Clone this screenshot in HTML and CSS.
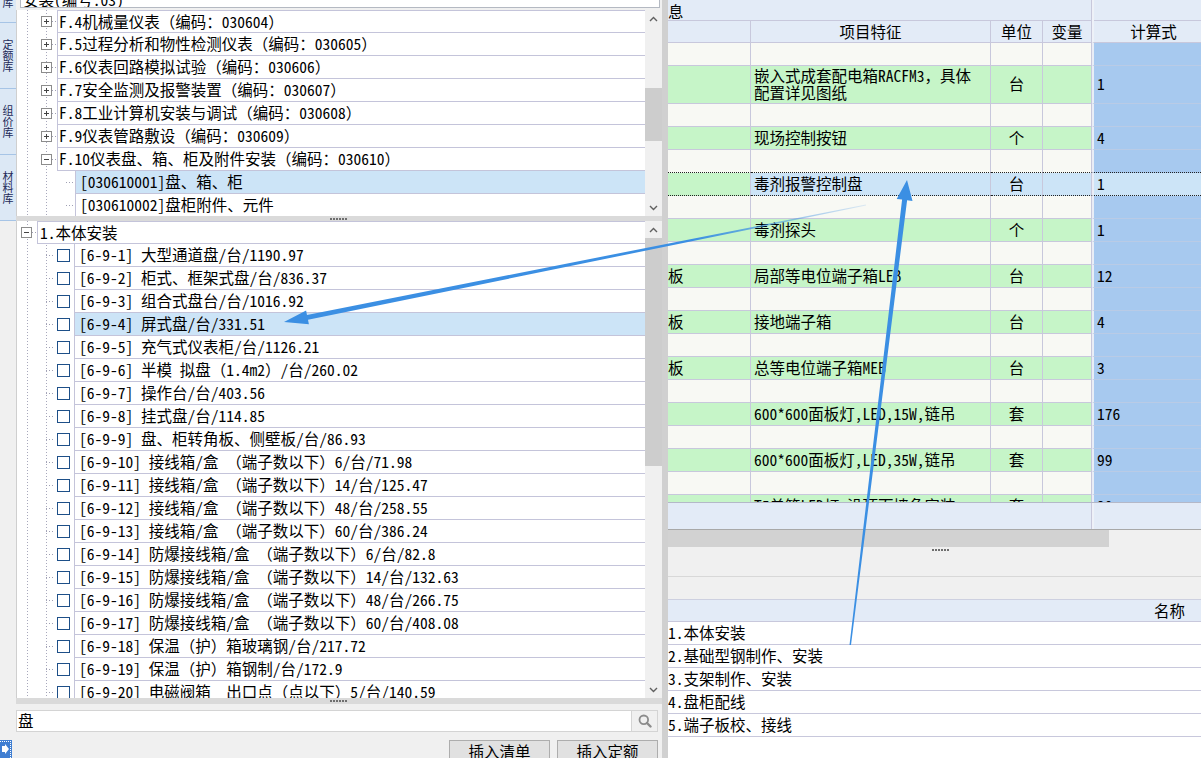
FILE: index.html
```html
<!DOCTYPE html>
<html lang="zh-CN">
<head>
<meta charset="utf-8">
<title>清单定额</title>
<link rel="stylesheet" href="styles.css">
</head>
<body>
<div class="app">
  <aside class="sidebar">
    <div class="tab tab-top"><span class="vt">库</span></div>
    <div class="tab"><span class="vt">定额库</span></div>
    <div class="tab"><span class="vt">组价库</span></div>
    <div class="tab"><span class="vt">材料库</span></div>
    <div class="side-rest">
      <svg class="side-icon" width="12" height="18" viewBox="0 0 12 18">
        <rect x="0" y="0" width="12" height="18" fill="#3f7ed2"/>
        <path d="M0 1.5H11M10.5 1V18" stroke="#ffffff" stroke-width="1" stroke-dasharray="1 1" fill="none"/>
        <polygon points="2,6 5,6 5,4 9,9 5,14 5,12 2,12" fill="#ffffff"/>
      </svg>
    </div>
  </aside>

  <section class="left">
    <div class="combo"><span>安装(编号:03)</span></div>

    <div class="tree top-tree">
      <div class="tree-body">
        <div class="trow f"><span class="exp plus"></span><span class="hdot"></span><div class="cell first">F.4机械量仪表（编码：030604）</div></div>
        <div class="trow f"><span class="exp plus"></span><span class="hdot"></span><div class="cell">F.5过程分析和物性检测仪表（编码：030605）</div></div>
        <div class="trow f"><span class="exp plus"></span><span class="hdot"></span><div class="cell">F.6仪表回路模拟试验（编码：030606）</div></div>
        <div class="trow f"><span class="exp plus"></span><span class="hdot"></span><div class="cell">F.7安全监测及报警装置（编码：030607）</div></div>
        <div class="trow f"><span class="exp plus"></span><span class="hdot"></span><div class="cell">F.8工业计算机安装与调试（编码：030608）</div></div>
        <div class="trow f"><span class="exp plus"></span><span class="hdot"></span><div class="cell">F.9仪表管路敷设（编码：030609）</div></div>
        <div class="trow f"><span class="exp minus"></span><span class="hdot"></span><div class="cell">F.10仪表盘、箱、柜及附件安装（编码：030610）</div></div>
        <div class="trow ch"><span class="hdot"></span><div class="cell hl">[030610001]盘、箱、柜</div></div>
        <div class="trow ch"><span class="hdot"></span><div class="cell">[030610002]盘柜附件、元件</div></div>
      </div>
      <div class="vscroll">
        <div class="arr"><svg width="9" height="6" viewBox="0 0 9 6"><polyline points="1,5 4.5,1.5 8,5" fill="none" stroke="#606060" stroke-width="1.4"/></svg></div>
        <div class="track"><div class="thumb"></div></div>
        <div class="arr"><svg width="9" height="6" viewBox="0 0 9 6"><polyline points="1,1 4.5,4.5 8,1" fill="none" stroke="#606060" stroke-width="1.4"/></svg></div>
      </div>
    </div>

    <div class="splitter"><span class="dots"></span></div>

    <div class="tree bottom-tree">
      <div class="tree-body">
        <div class="trow rt"><span class="exp minus"></span><span class="hdot"></span><div class="cell first">1.本体安装</div></div>
        <div class="trow it"><span class="hdot"></span><span class="cb"></span><div class="cell">[6-9-1] 大型通道盘/台/1190.97</div></div>
        <div class="trow it"><span class="hdot"></span><span class="cb"></span><div class="cell">[6-9-2] 柜式、框架式盘/台/836.37</div></div>
        <div class="trow it"><span class="hdot"></span><span class="cb"></span><div class="cell">[6-9-3] 组合式盘台/台/1016.92</div></div>
        <div class="trow it"><span class="hdot"></span><span class="cb"></span><div class="cell hl">[6-9-4] 屏式盘/台/331.51</div></div>
        <div class="trow it"><span class="hdot"></span><span class="cb"></span><div class="cell">[6-9-5] 充气式仪表柜/台/1126.21</div></div>
        <div class="trow it"><span class="hdot"></span><span class="cb"></span><div class="cell">[6-9-6] 半模 拟盘（1.4m2）/台/260.02</div></div>
        <div class="trow it"><span class="hdot"></span><span class="cb"></span><div class="cell">[6-9-7] 操作台/台/403.56</div></div>
        <div class="trow it"><span class="hdot"></span><span class="cb"></span><div class="cell">[6-9-8] 挂式盘/台/114.85</div></div>
        <div class="trow it"><span class="hdot"></span><span class="cb"></span><div class="cell">[6-9-9] 盘、柜转角板、侧壁板/台/86.93</div></div>
        <div class="trow it"><span class="hdot"></span><span class="cb"></span><div class="cell">[6-9-10] 接线箱/盒 （端子数以下）6/台/71.98</div></div>
        <div class="trow it"><span class="hdot"></span><span class="cb"></span><div class="cell">[6-9-11] 接线箱/盒 （端子数以下）14/台/125.47</div></div>
        <div class="trow it"><span class="hdot"></span><span class="cb"></span><div class="cell">[6-9-12] 接线箱/盒 （端子数以下）48/台/258.55</div></div>
        <div class="trow it"><span class="hdot"></span><span class="cb"></span><div class="cell">[6-9-13] 接线箱/盒 （端子数以下）60/台/386.24</div></div>
        <div class="trow it"><span class="hdot"></span><span class="cb"></span><div class="cell">[6-9-14] 防爆接线箱/盒 （端子数以下）6/台/82.8</div></div>
        <div class="trow it"><span class="hdot"></span><span class="cb"></span><div class="cell">[6-9-15] 防爆接线箱/盒 （端子数以下）14/台/132.63</div></div>
        <div class="trow it"><span class="hdot"></span><span class="cb"></span><div class="cell">[6-9-16] 防爆接线箱/盒 （端子数以下）48/台/266.75</div></div>
        <div class="trow it"><span class="hdot"></span><span class="cb"></span><div class="cell">[6-9-17] 防爆接线箱/盒 （端子数以下）60/台/408.08</div></div>
        <div class="trow it"><span class="hdot"></span><span class="cb"></span><div class="cell">[6-9-18] 保温（护）箱玻璃钢/台/217.72</div></div>
        <div class="trow it"><span class="hdot"></span><span class="cb"></span><div class="cell">[6-9-19] 保温（护）箱钢制/台/172.9</div></div>
        <div class="trow it"><span class="hdot"></span><span class="cb"></span><div class="cell">[6-9-20] 电磁阀箱  出口点（点以下）5/台/140.59</div></div>
      </div>
      <div class="vscroll">
        <div class="arr"><svg width="9" height="6" viewBox="0 0 9 6"><polyline points="1,5 4.5,1.5 8,5" fill="none" stroke="#606060" stroke-width="1.4"/></svg></div>
        <div class="track"><div class="thumb"></div></div>
        <div class="arr"><svg width="9" height="6" viewBox="0 0 9 6"><polyline points="1,1 4.5,4.5 8,1" fill="none" stroke="#606060" stroke-width="1.4"/></svg></div>
      </div>
    </div>

    <div class="splitter low"><span class="dots"></span></div>

    <div class="search">
      <div class="search-input">盘</div>
      <div class="search-btn">
        <svg width="14" height="14" viewBox="0 0 14 14"><circle cx="5.8" cy="5.8" r="4.3" fill="none" stroke="#8c8c8c" stroke-width="1.8"/><line x1="9" y1="9" x2="12.5" y2="12.5" stroke="#8c8c8c" stroke-width="2.4" stroke-linecap="round"/></svg>
      </div>
    </div>

    <div class="btns">
      <div class="btn">插入清单</div>
      <div class="btn">插入定额</div>
    </div>
  </section>

  <div class="divider"></div>

  <section class="right">
    <div class="h1"><div class="hc">息</div><div class="hc hc2"></div></div>
    <div class="h2">
      <div class="c"></div><div class="c ctr">项目特征</div><div class="c ctr">单位</div><div class="c ctr">变量</div><div class="c ctr calc-h">计算式</div>
    </div>
    <div class="tbody">
      <div class="tr blank"><div class="c"></div><div class="c"></div><div class="c"></div><div class="c"></div><div class="c calc"></div></div>
      <div class="tr green tall"><div class="c"></div><div class="c"><span>嵌入式成套配电箱RACFM3，具体<br>配置详见图纸</span></div><div class="c ctr">台</div><div class="c"></div><div class="c calc">1</div></div>
      <div class="tr blank"><div class="c"></div><div class="c"></div><div class="c"></div><div class="c"></div><div class="c calc"></div></div>
      <div class="tr green"><div class="c"></div><div class="c">现场控制按钮</div><div class="c ctr">个</div><div class="c"></div><div class="c calc">4</div></div>
      <div class="tr blank pre"><div class="c"></div><div class="c"></div><div class="c"></div><div class="c"></div><div class="c calc"></div></div>
      <div class="tr sel"><div class="c"></div><div class="c">毒剂报警控制盘</div><div class="c ctr">台</div><div class="c"></div><div class="c calc">1</div></div>
      <div class="tr blank"><div class="c"></div><div class="c"></div><div class="c"></div><div class="c"></div><div class="c calc"></div></div>
      <div class="tr green"><div class="c"></div><div class="c">毒剂探头</div><div class="c ctr">个</div><div class="c"></div><div class="c calc">1</div></div>
      <div class="tr blank"><div class="c"></div><div class="c"></div><div class="c"></div><div class="c"></div><div class="c calc"></div></div>
      <div class="tr green"><div class="c c1">板</div><div class="c">局部等电位端子箱LEB</div><div class="c ctr">台</div><div class="c"></div><div class="c calc">12</div></div>
      <div class="tr blank"><div class="c"></div><div class="c"></div><div class="c"></div><div class="c"></div><div class="c calc"></div></div>
      <div class="tr green"><div class="c c1">板</div><div class="c">接地端子箱</div><div class="c ctr">台</div><div class="c"></div><div class="c calc">4</div></div>
      <div class="tr blank"><div class="c"></div><div class="c"></div><div class="c"></div><div class="c"></div><div class="c calc"></div></div>
      <div class="tr green"><div class="c c1">板</div><div class="c">总等电位端子箱MEB</div><div class="c ctr">台</div><div class="c"></div><div class="c calc">3</div></div>
      <div class="tr blank"><div class="c"></div><div class="c"></div><div class="c"></div><div class="c"></div><div class="c calc"></div></div>
      <div class="tr green"><div class="c"></div><div class="c">600*600面板灯,LED,15W,链吊</div><div class="c ctr">套</div><div class="c"></div><div class="c calc">176</div></div>
      <div class="tr blank"><div class="c"></div><div class="c"></div><div class="c"></div><div class="c"></div><div class="c calc"></div></div>
      <div class="tr green"><div class="c"></div><div class="c">600*600面板灯,LED,35W,链吊</div><div class="c ctr">套</div><div class="c"></div><div class="c calc">99</div></div>
      <div class="tr blank"><div class="c"></div><div class="c"></div><div class="c"></div><div class="c"></div><div class="c calc"></div></div>
      <div class="tr green"><div class="c"></div><div class="c">T5单管LED灯,沿顶面墙角安装</div><div class="c ctr">套</div><div class="c"></div><div class="c calc">20</div></div>
    </div>
    <div class="tfoot"><div class="fc"></div><div class="fc fc2"></div></div>
    <div class="hscroll"><div class="hthumb"></div></div>
    <div class="rsplit"><span class="dots"></span></div>
    <div class="band"></div>
    <div class="band band2"></div>
    <div class="lhead">名称</div>
    <div class="lrow">1.本体安装</div>
    <div class="lrow">2.基础型钢制作、安装</div>
    <div class="lrow">3.支架制作、安装</div>
    <div class="lrow">4.盘柜配线</div>
    <div class="lrow">5.端子板校、接线</div>
    <div class="lrest"></div>
  </section>

  <svg class="arrows" width="1201" height="758" viewBox="0 0 1201 758">
    <defs>
      <linearGradient id="fade1" gradientUnits="userSpaceOnUse" x1="284" y1="322" x2="866" y2="205">
        <stop offset="0" stop-color="#3b8fe3" stop-opacity="1"/>
        <stop offset="0.7" stop-color="#3b8fe3" stop-opacity="1"/>
        <stop offset="1" stop-color="#3b8fe3" stop-opacity="0.15"/>
      </linearGradient>
    </defs>
    <polygon fill="url(#fade1)" points="284,322 308.9,324.2 308.0,319.8 866.1,205.5 865.9,204.5 307.0,314.9 306.1,310.4"/>
    <polygon fill="#3b8fe3" points="907,180 912.5,200.9 907.1,200.2 851,645.1 849.5,644.9 902.1,199.6 896.7,198.9"/>
  </svg>
</div>
</body>
</html>
```

FILE: styles.css
```css
:root {
  --tl: #c4c4da;
  --line: #c8c8dc;
  --hdr: #e3ebf7;
  --green: #c6f5c8;
  --blank: #f8f9f4;
  --blue: #a7c9ef;
  --sel: #cce4f7;
}

* { box-sizing: border-box; }

html, body { margin: 0; padding: 0; }

body {
  width: 1201px;
  height: 758px;
  overflow: hidden;
  background: #f0f0f0;
  font-family: "Noto Sans Mono CJK SC", "Noto Sans CJK SC", "Liberation Mono", monospace;
  font-size: 15.5px;
  color: #000;
}

.app {
  position: relative;
  display: flex;
  width: 1201px;
  height: 758px;
  overflow: hidden;
}

/* ---------- sidebar ---------- */
.sidebar {
  width: 16px;
  flex: none;
  display: flex;
  flex-direction: column;
}
.tab {
  flex: none;
  height: 66px;
  background: #dce8f5;
  border-bottom: 1px solid #a6c4e6;
  display: flex;
  align-items: center;
}
.tab-top {
  height: 23px;
  align-items: flex-end;
  padding-bottom: 14px;
  overflow: hidden;
}
.vt {
  display: block;
  writing-mode: vertical-rl;
  text-orientation: upright;
  font-size: 11px;
  line-height: 15px;
  color: #1e2a58;
}
.side-rest {
  flex: 1;
  display: flex;
  align-items: flex-end;
}
.side-icon { display: block; }

/* ---------- left panel ---------- */
.left {
  width: 646px;
  flex: none;
  display: flex;
  flex-direction: column;
}
.combo {
  flex: none;
  height: 8px;
  margin: 0 2px 2px 4px;
  border: 1px solid #b4b9c2;
  border-top: none;
  background: #fff;
  display: flex;
  align-items: flex-end;
  overflow: hidden;
  padding-left: 2px;
}
.combo span {
  line-height: 16px;
  white-space: nowrap;
}

.tree {
  flex: none;
  display: flex;
  border-left: 1px solid #cfcfcf;
  background: #fff;
  overflow: hidden;
}
.top-tree { height: 206px; }
.bottom-tree { height: 477px; }

.tree-body {
  flex: 1;
  min-width: 0;
  overflow: hidden;
  background-color: #fff;
  background-image:
    repeating-linear-gradient(to bottom, #a8a8bc 0 1px, transparent 1px 3px),
    repeating-linear-gradient(to bottom, #a8a8bc 0 1px, transparent 1px 3px);
  background-size: 1px 100%, 1px 100%;
  background-position: 10px 0, 29px 0;
  background-repeat: no-repeat;
}

.trow {
  display: flex;
  align-items: center;
  height: 23px;
}
.trow.f { padding-left: 24px; }
.trow.ch { padding-left: 49px; }
.trow.rt { padding-left: 4px; }
.trow.it { padding-left: 29px; }

.exp {
  position: relative;
  flex: none;
  width: 11px;
  height: 11px;
  border: 1px solid #8c8c8c;
  background: #fff;
}
.exp::before {
  content: "";
  position: absolute;
  left: 2px;
  top: 4px;
  width: 5px;
  height: 1px;
  background: #444;
}
.exp.plus::after {
  content: "";
  position: absolute;
  left: 4px;
  top: 2px;
  width: 1px;
  height: 5px;
  background: #444;
}

.hdot {
  flex: none;
  height: 1px;
  background: repeating-linear-gradient(to right, #a0a0b4 0 1px, transparent 1px 3px);
}
.f .hdot, .rt .hdot { width: 5px; }
.ch .hdot, .it .hdot { width: 9px; }

.cb {
  flex: none;
  width: 13px;
  height: 13px;
  margin: 0 4px 0 2px;
  border: 1px solid #1d4f88;
  background: #fff;
}

.cell {
  flex: 1;
  min-width: 0;
  align-self: stretch;
  display: flex;
  align-items: center;
  padding: 0 0 2px 1px;
  border-left: 1px solid var(--tl);
  border-bottom: 1px solid var(--tl);
  white-space: pre;
  overflow: hidden;
  background: #fff;
}
.cell.first { border-top: 1px solid var(--tl); }
.ch .cell, .it .cell { padding-left: 4px; }
.rt .cell { padding-left: 2px; }
.cell.hl { background: var(--sel); }

.vscroll {
  flex: none;
  width: 17px;
  background: #f0f0f0;
  display: flex;
  flex-direction: column;
}
.arr {
  flex: none;
  height: 17px;
  display: flex;
  align-items: center;
  justify-content: center;
}
.arr svg { display: block; }
.track { flex: 1; }
.thumb { background: #cdcdcd; }
.top-tree .thumb { margin-top: 61px; height: 53px; }
.bottom-tree .thumb { height: 228px; }

.splitter {
  flex: none;
  height: 5px;
  background: #dadada;
  display: flex;
  align-items: center;
  justify-content: center;
}
.splitter.low { height: 6px; }
.dots {
  display: block;
  width: 18px;
  height: 2px;
  background: repeating-linear-gradient(to right, #6e6e6e 0 2px, transparent 2px 3px);
}

.search {
  flex: none;
  display: flex;
  height: 22px;
  margin: 6px 4px 0 0;
}
.search-input {
  flex: 1;
  display: flex;
  align-items: center;
  padding: 0 0 2px 1px;
  background: #fff;
  border: 1px solid #d4d4d4;
}
.search-btn {
  width: 26px;
  display: flex;
  align-items: center;
  justify-content: center;
  background: #f0f0f0;
  border: 1px solid #d4d4d4;
  border-left: none;
}

.btns {
  flex: none;
  display: flex;
  justify-content: flex-end;
  gap: 7px;
  margin: 8px 4px 0 0;
}
.btn {
  width: 101px;
  height: 24px;
  display: flex;
  align-items: center;
  justify-content: center;
  padding-bottom: 3px;
  background: #e1e1e1;
  border: 1px solid #adadad;
}

.divider {
  flex: none;
  width: 6px;
  background: #d0d0d0;
}

/* ---------- right panel ---------- */
.right {
  flex: 1;
  min-width: 0;
  display: flex;
  flex-direction: column;
  overflow: hidden;
  background: #f0f0f0;
}

.h1 {
  flex: none;
  display: grid;
  grid-template-columns: 424px 1fr;
  height: 21px;
  background: var(--hdr);
  border-bottom: 1px solid var(--line);
}
.hc {
  display: flex;
  align-items: center;
  padding-bottom: 2px;
  border-right: 1px solid var(--line);
  white-space: nowrap;
}
.hc2 {
  border-right: none;
  border-left: 2px solid #eef1f8;
}

.h2, .tr {
  display: grid;
  grid-template-columns: 83px 240px 52px 49px 1fr;
}
.h2 {
  flex: none;
  height: 22px;
  background: var(--hdr);
}
.tr { height: 23px; }
.tr.tall { height: 38px; }

.c {
  display: flex;
  align-items: center;
  padding: 0 0 2px 3px;
  border-right: 1px solid var(--line);
  border-bottom: 1px solid var(--line);
  white-space: nowrap;
  overflow: hidden;
}
.h2 .c { padding-bottom: 1px; }
.c.ctr { justify-content: center; padding-left: 0; }
.c.c1 { padding-left: 0; }
.h2 .calc-h {
  border-right: none;
  border-left: 2px solid #eef1f8;
  padding-left: 12px;
}
.tall .c { line-height: 16.5px; }

.tbody {
  flex: none;
  height: 459px;
  overflow: hidden;
}
.tr.blank .c { background: var(--blank); }
.tr.green .c { background: var(--green); }
.tr.sel .c {
  background: var(--sel);
  border-bottom: 1px dotted #222;
}
.tr.sel .c:first-child { background: var(--green); }
.tr.pre .c { border-bottom: 1px dotted #222; }
.tr .c.calc {
  background: var(--blue);
  border-right: none;
  border-left: 2px solid #e9edf6;
  border-bottom-color: #b9cbe6;
}
.tr.sel .c.calc {
  background: var(--sel);
  border-bottom: 1px dotted #222;
}
.tr.pre .c.calc { border-bottom: 1px dotted #222; }

.tfoot {
  flex: none;
  display: grid;
  grid-template-columns: 424px 1fr;
  height: 27px;
  background: var(--hdr);
  border-top: 1px solid #b4b8c8;
}
.fc { border-right: 1px solid var(--line); }
.fc2 { border-right: none; border-left: 2px solid #eef1f8; }

.hscroll {
  flex: none;
  height: 18px;
  display: flex;
  background: #f0f0f0;
  border-top: 1px solid #a8a8a8;
}
.hthumb {
  width: 441px;
  background: #d2d2d2;
}

.rsplit {
  flex: none;
  height: 6px;
  display: flex;
  align-items: center;
  padding-left: 264px;
}

.band {
  flex: none;
  height: 24px;
  background: #f0f0f0;
  border-bottom: 1px solid #d8d8d8;
}
.band2 {
  height: 23px;
  border-bottom-color: #cdd0e0;
}

.lhead {
  flex: none;
  height: 22px;
  display: flex;
  align-items: center;
  justify-content: flex-end;
  padding: 0 16px 1px 0;
  background: var(--hdr);
  border-bottom: 1px solid var(--line);
}
.lrow {
  flex: none;
  height: 23px;
  display: flex;
  align-items: center;
  padding: 0 0 2px 0;
  background: #fff;
  border-bottom: 1px solid var(--line);
  white-space: nowrap;
  overflow: hidden;
}
.lrest {
  flex: 1;
  background: #fff;
}

/* ---------- annotation arrows ---------- */
.arrows {
  position: absolute;
  left: 0;
  top: 0;
  pointer-events: none;
}
```
